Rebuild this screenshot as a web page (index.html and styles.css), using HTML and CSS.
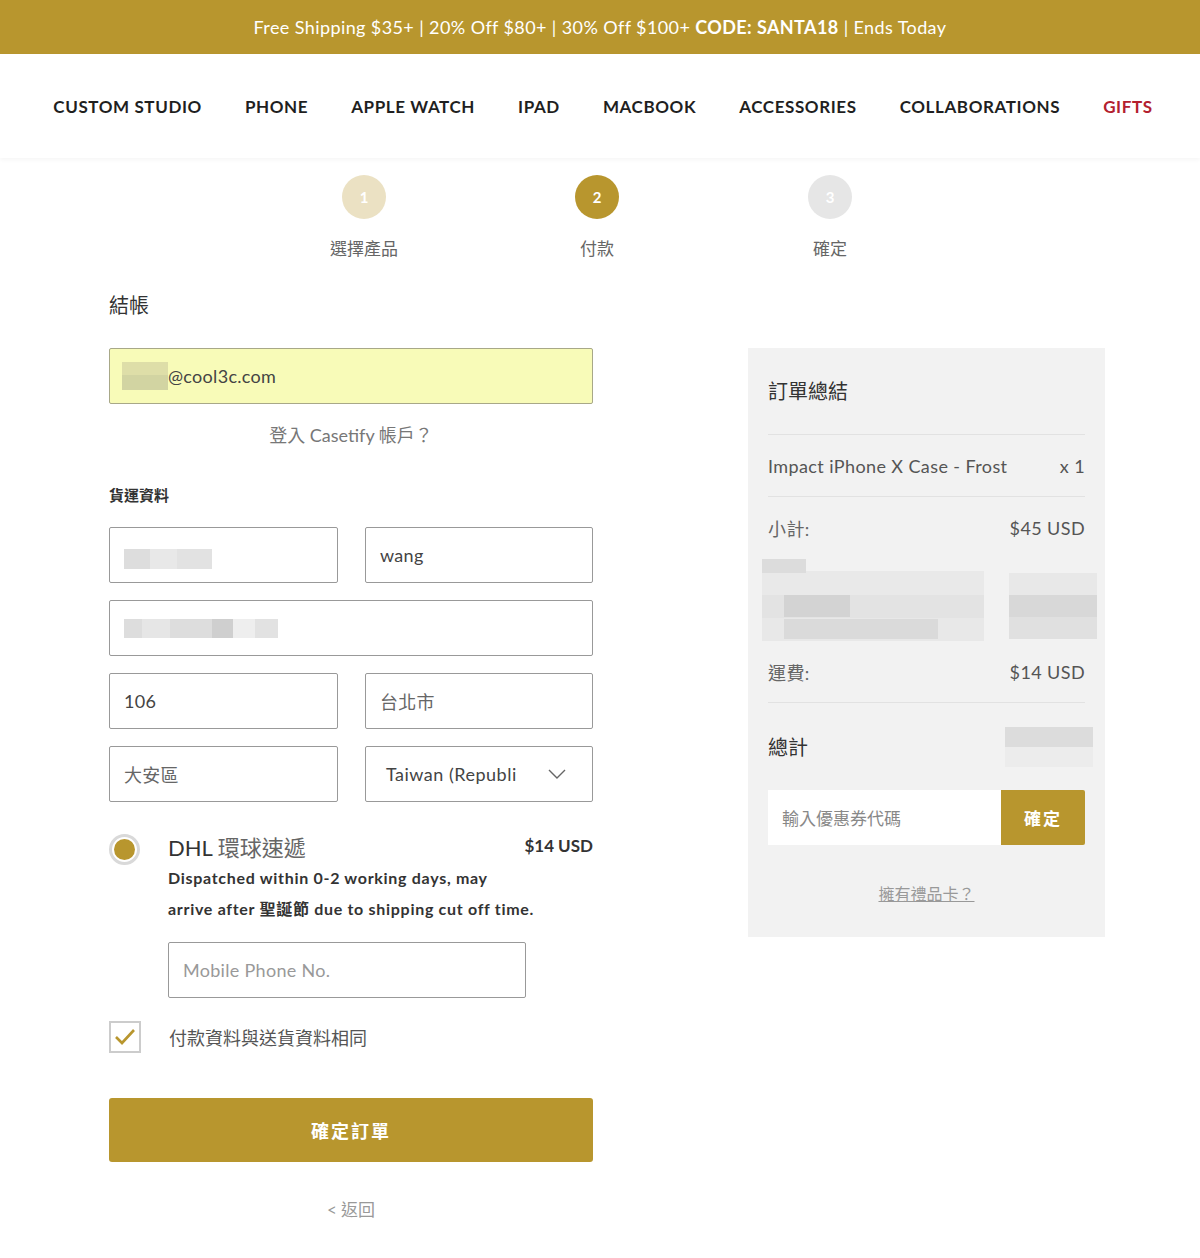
FILE: index.html
```html
<!DOCTYPE html>
<html lang="zh-Hant">
<head>
  <meta charset="UTF-8">
  <meta name="viewport" content="width=device-width, initial-scale=1.0">
  <title>Checkout</title>
  <link rel="stylesheet" href="styles.css">
</head>
<body>
  <!-- Promo banner -->
  <div class="promo">
    Free Shipping $35+ | 20% Off $80+ | 30% Off $100+ <b>CODE: SANTA18</b> | Ends Today
  </div>

  <!-- Main navigation -->
  <nav class="nav">
    <a href="#">Custom Studio</a>
    <a href="#">Phone</a>
    <a href="#">Apple Watch</a>
    <a href="#">iPad</a>
    <a href="#">MacBook</a>
    <a href="#">Accessories</a>
    <a href="#">Collaborations</a>
    <a href="#" class="gifts">Gifts</a>
  </nav>

  <!-- Steps -->
  <div class="steps">
    <div class="step done">
      <span class="dot">1</span>
      <span class="step-label">選擇產品</span>
    </div>
    <div class="step active">
      <span class="dot">2</span>
      <span class="step-label">付款</span>
    </div>
    <div class="step">
      <span class="dot">3</span>
      <span class="step-label">確定</span>
    </div>
  </div>

  <div class="checkout">
    <!-- Form column -->
    <div class="form-col">
      <h1 class="title">結帳</h1>

      <div class="field email">
        <span class="blur blur-email"></span>@cool3c.com
      </div>
      <a href="#" class="login">登入 Casetify 帳戶？</a>

      <h2 class="section">貨運資料</h2>

      <div class="grid">
        <div class="field"><span class="blur blur-name"></span></div>
        <div class="field">wang</div>
        <div class="field wide"><span class="blur blur-addr"></span></div>
        <div class="field">106</div>
        <div class="field cjk">台北市</div>
        <div class="field cjk">大安區</div>
        <div class="field select">
          <span>Taiwan (Republi</span>
          <svg width="18" height="10" viewBox="0 0 18 10"><polyline points="1,1 9,9 17,1" fill="none" stroke="#666" stroke-width="1.4"/></svg>
        </div>
      </div>

      <div class="shipping">
        <span class="radio"><span></span></span>
        <div class="ship-body">
          <div class="ship-head">
            <span class="ship-name">DHL <span class="cjk-light">環球速遞</span></span>
            <span class="ship-price">$14 USD</span>
          </div>
          <p class="ship-desc">Dispatched within 0-2 working days, may<br>arrive after 聖誕節 due to shipping cut off time.</p>
          <div class="field phone">Mobile Phone No.</div>
        </div>
      </div>

      <label class="same">
        <span class="check">
          <svg width="22" height="18" viewBox="0 0 22 18"><polyline points="2,9 8,15 20,2" fill="none" stroke="#b8962e" stroke-width="2.6"/></svg>
        </span>
        付款資料與送貨資料相同
      </label>

      <button class="submit">確定訂單</button>
      <a href="#" class="back">&lt; 返回</a>
    </div>

    <!-- Order summary -->
    <div class="summary">
      <h3 class="sum-title">訂單總結</h3>
      <div class="sum-row item">
        <span>Impact iPhone X Case - Frost</span>
        <span>x 1</span>
      </div>
      <div class="sum-row">
        <span class="cjk-light">小計:</span>
        <span>$45 USD</span>
      </div>
      <div class="blur-rows">
        <div class="blur-left">
          <span class="px a"></span><span class="px b"></span><span class="px c"></span>
        </div>
        <div class="blur-right"></div>
      </div>
      <div class="sum-row ship-row">
        <span class="cjk-light">運費:</span>
        <span>$14 USD</span>
      </div>
      <div class="total">
        <span>總計</span>
        <span class="blur blur-total"></span>
      </div>
      <div class="coupon">
        <span class="coupon-input">輸入優惠券代碼</span>
        <button class="coupon-btn">確定</button>
      </div>
      <a href="#" class="gift">擁有禮品卡？</a>
    </div>
  </div>
</body>
</html>
```

FILE: styles.css
```css
* {
  box-sizing: border-box;
  margin: 0;
  padding: 0;
}

body {
  font-family: Lato, "Noto Sans CJK TC", sans-serif;
  color: #333;
  background: #fff;
  width: 1200px;
}

a {
  text-decoration: none;
  color: inherit;
}

.promo {
  height: 54px;
  line-height: 54px;
  background: #b8962e;
  color: #fff;
  font-size: 18px;
  letter-spacing: 0.4px;
  text-align: center;
}

.promo b {
  font-weight: 700;
}

.nav {
  height: 104px;
  display: flex;
  align-items: center;
  justify-content: center;
  gap: 43px;
  padding-left: 6px;
  box-shadow: 0 2px 4px rgba(0, 0, 0, 0.04);
}

.nav a {
  font-size: 17px;
  font-weight: 700;
  text-transform: uppercase;
  color: #1f1f1f;
  letter-spacing: 0.6px;
}

.nav a.gifts {
  color: #b3202e;
}

.steps {
  display: flex;
  justify-content: center;
  padding-top: 17px;
  padding-right: 6px;
}

.step {
  width: 233px;
  display: flex;
  flex-direction: column;
  align-items: center;
}

.dot {
  width: 44px;
  height: 44px;
  border-radius: 50%;
  background: #e6e6e6;
  color: #fff;
  font-weight: 700;
  font-size: 15px;
  display: flex;
  align-items: center;
  justify-content: center;
}

.step.done .dot {
  background: #ebe1c3;
}

.step.active .dot {
  background: #b8962e;
}

.step-label {
  margin-top: 20px;
  font-size: 17px;
  line-height: 20px;
  color: #666;
}

.checkout {
  display: flex;
  justify-content: space-between;
  width: 996px;
  margin: 32px 0 0 109px;
}

.form-col {
  width: 484px;
  display: flex;
  flex-direction: column;
}

.title {
  font-size: 20px;
  font-weight: 400;
  line-height: 28px;
  color: #333;
}

.field {
  height: 56px;
  border: 1px solid #999;
  border-radius: 2px;
  display: flex;
  align-items: center;
  padding: 0 14px;
  font-size: 18px;
  letter-spacing: 0.3px;
  color: #444;
  background: #fff;
}

.field.cjk {
  color: #666;
}

.field.email {
  margin-top: 29px;
  background: #f8fbb8;
  border-color: #a8a888;
  padding-left: 12px;
}

.blur {
  display: inline-block;
  background: linear-gradient(90deg, #ddd 0 30%, #e8e8e8 30% 60%, #e2e2e2 60%);
}

.blur-email {
  width: 46px;
  height: 28px;
  background: linear-gradient(180deg, #dedea8 0 45%, #d2d4a2 45%);
}

.blur-name {
  width: 88px;
  height: 20px;
  margin-top: 8px;
}

.blur-addr {
  width: 154px;
  height: 19px;
  background: linear-gradient(90deg, #ddd 0 12%, #e6e6e6 12% 30%, #ddd 30% 57%, #cfcfcf 57% 71%, #eee 71% 85%, #e2e2e2 85%);
}

.login {
  margin-top: 19px;
  text-align: center;
  font-size: 18px;
  line-height: 24px;
  color: #777;
}

.section {
  margin-top: 38px;
  font-size: 15px;
  font-weight: 700;
  line-height: 20px;
  color: #333;
}

.grid {
  margin-top: 22px;
  display: grid;
  grid-template-columns: 229px 228px;
  column-gap: 27px;
  row-gap: 17px;
}

.grid .wide {
  grid-column: 1 / 3;
}

.field.select {
  justify-content: space-between;
  padding: 0 26px 0 20px;
  letter-spacing: 0.5px;
}

.shipping {
  margin-top: 32px;
  display: flex;
  gap: 28px;
}

.radio {
  flex: 0 0 31px;
  width: 31px;
  height: 31px;
  border-radius: 50%;
  border: 3px solid #d9d9d9;
  display: flex;
  align-items: center;
  justify-content: center;
}

.radio span {
  width: 21px;
  height: 21px;
  border-radius: 50%;
  background: #b8962e;
}

.ship-body {
  flex: 1;
}

.ship-head {
  display: flex;
  justify-content: space-between;
  line-height: 28px;
}

.ship-name {
  font-size: 22px;
  color: #333;
}

.cjk-light {
  color: #666;
}

.ship-price {
  font-size: 17px;
  font-weight: 700;
  line-height: 24px;
}

.ship-desc {
  font-size: 16px;
  font-weight: 700;
  line-height: 31px;
  letter-spacing: 0.7px;
  color: #333;
  white-space: nowrap;
}

.field.phone {
  margin-top: 18px;
  width: 358px;
  color: #999;
}

.same {
  margin-top: 23px;
  display: flex;
  align-items: center;
  gap: 28px;
  font-size: 18px;
  color: #555;
}

.check {
  width: 32px;
  height: 32px;
  border: 2px solid #ccc;
  display: flex;
  align-items: center;
  justify-content: center;
}

.submit {
  margin-top: 45px;
  height: 64px;
  border: none;
  border-radius: 3px;
  background: #b8962e;
  color: #fff;
  font-family: inherit;
  font-size: 18px;
  font-weight: 700;
  letter-spacing: 2px;
}

.back {
  margin-top: 38px;
  text-align: center;
  font-size: 17px;
  line-height: 20px;
  color: #999;
}

.summary {
  width: 357px;
  height: 589px;
  margin-top: 57px;
  background: #f2f2f2;
  padding: 29px 20px 0;
  display: flex;
  flex-direction: column;
}

.sum-title {
  font-size: 20px;
  font-weight: 400;
  line-height: 28px;
  padding-bottom: 29px;
  border-bottom: 1px solid #e2e2e2;
}

.sum-row {
  display: flex;
  justify-content: space-between;
  align-items: center;
  height: 62px;
  font-size: 18px;
  letter-spacing: 0.4px;
  color: #555;
}

.sum-row.item {
  border-bottom: 1px solid #e2e2e2;
}

.blur-rows {
  display: flex;
  justify-content: space-between;
  height: 82px;
  margin: 0 -12px 0 -6px;
}

.blur-left {
  width: 222px;
  position: relative;
  background: linear-gradient(180deg, #fff0 0 15%, #e9e9e9 15% 44%, #e3e3e3 44% 72%, #e8e8e8 72%);
}

.px {
  position: absolute;
  display: block;
}

.px.a {
  left: 0;
  top: 0;
  width: 44px;
  height: 14px;
  background: #dcdcdc;
}

.px.b {
  left: 22px;
  top: 36px;
  width: 66px;
  height: 22px;
  background: #d3d3d3;
}

.px.c {
  left: 22px;
  top: 60px;
  width: 154px;
  height: 20px;
  background: #dadada;
}

.blur-right {
  width: 88px;
  height: 66px;
  margin-top: 14px;
  background: linear-gradient(180deg, #e8e8e8 0 33%, #d8d8d8 33% 66%, #e0e0e0 66%);
}

.sum-row.ship-row {
  border-bottom: 1px solid #e2e2e2;
}

.total {
  display: flex;
  justify-content: space-between;
  align-items: center;
  height: 87px;
  font-size: 20px;
  color: #333;
  margin-right: -8px;
}

.blur-total {
  width: 88px;
  height: 40px;
  background: linear-gradient(180deg, #dcdcdc 0 50%, #ececec 50%);
}

.coupon {
  display: flex;
  height: 55px;
}

.coupon-input {
  flex: 1;
  background: #fff;
  display: flex;
  align-items: center;
  padding-left: 14px;
  font-size: 17px;
  color: #888;
}

.coupon-btn {
  width: 84px;
  border: none;
  border-radius: 0 2px 2px 0;
  background: #b8962e;
  color: #fff;
  font-family: inherit;
  font-size: 17px;
  font-weight: 700;
  letter-spacing: 2px;
}

.gift {
  margin-top: 36px;
  text-align: center;
  font-size: 16px;
  color: #999;
  text-decoration: underline;
}
```
